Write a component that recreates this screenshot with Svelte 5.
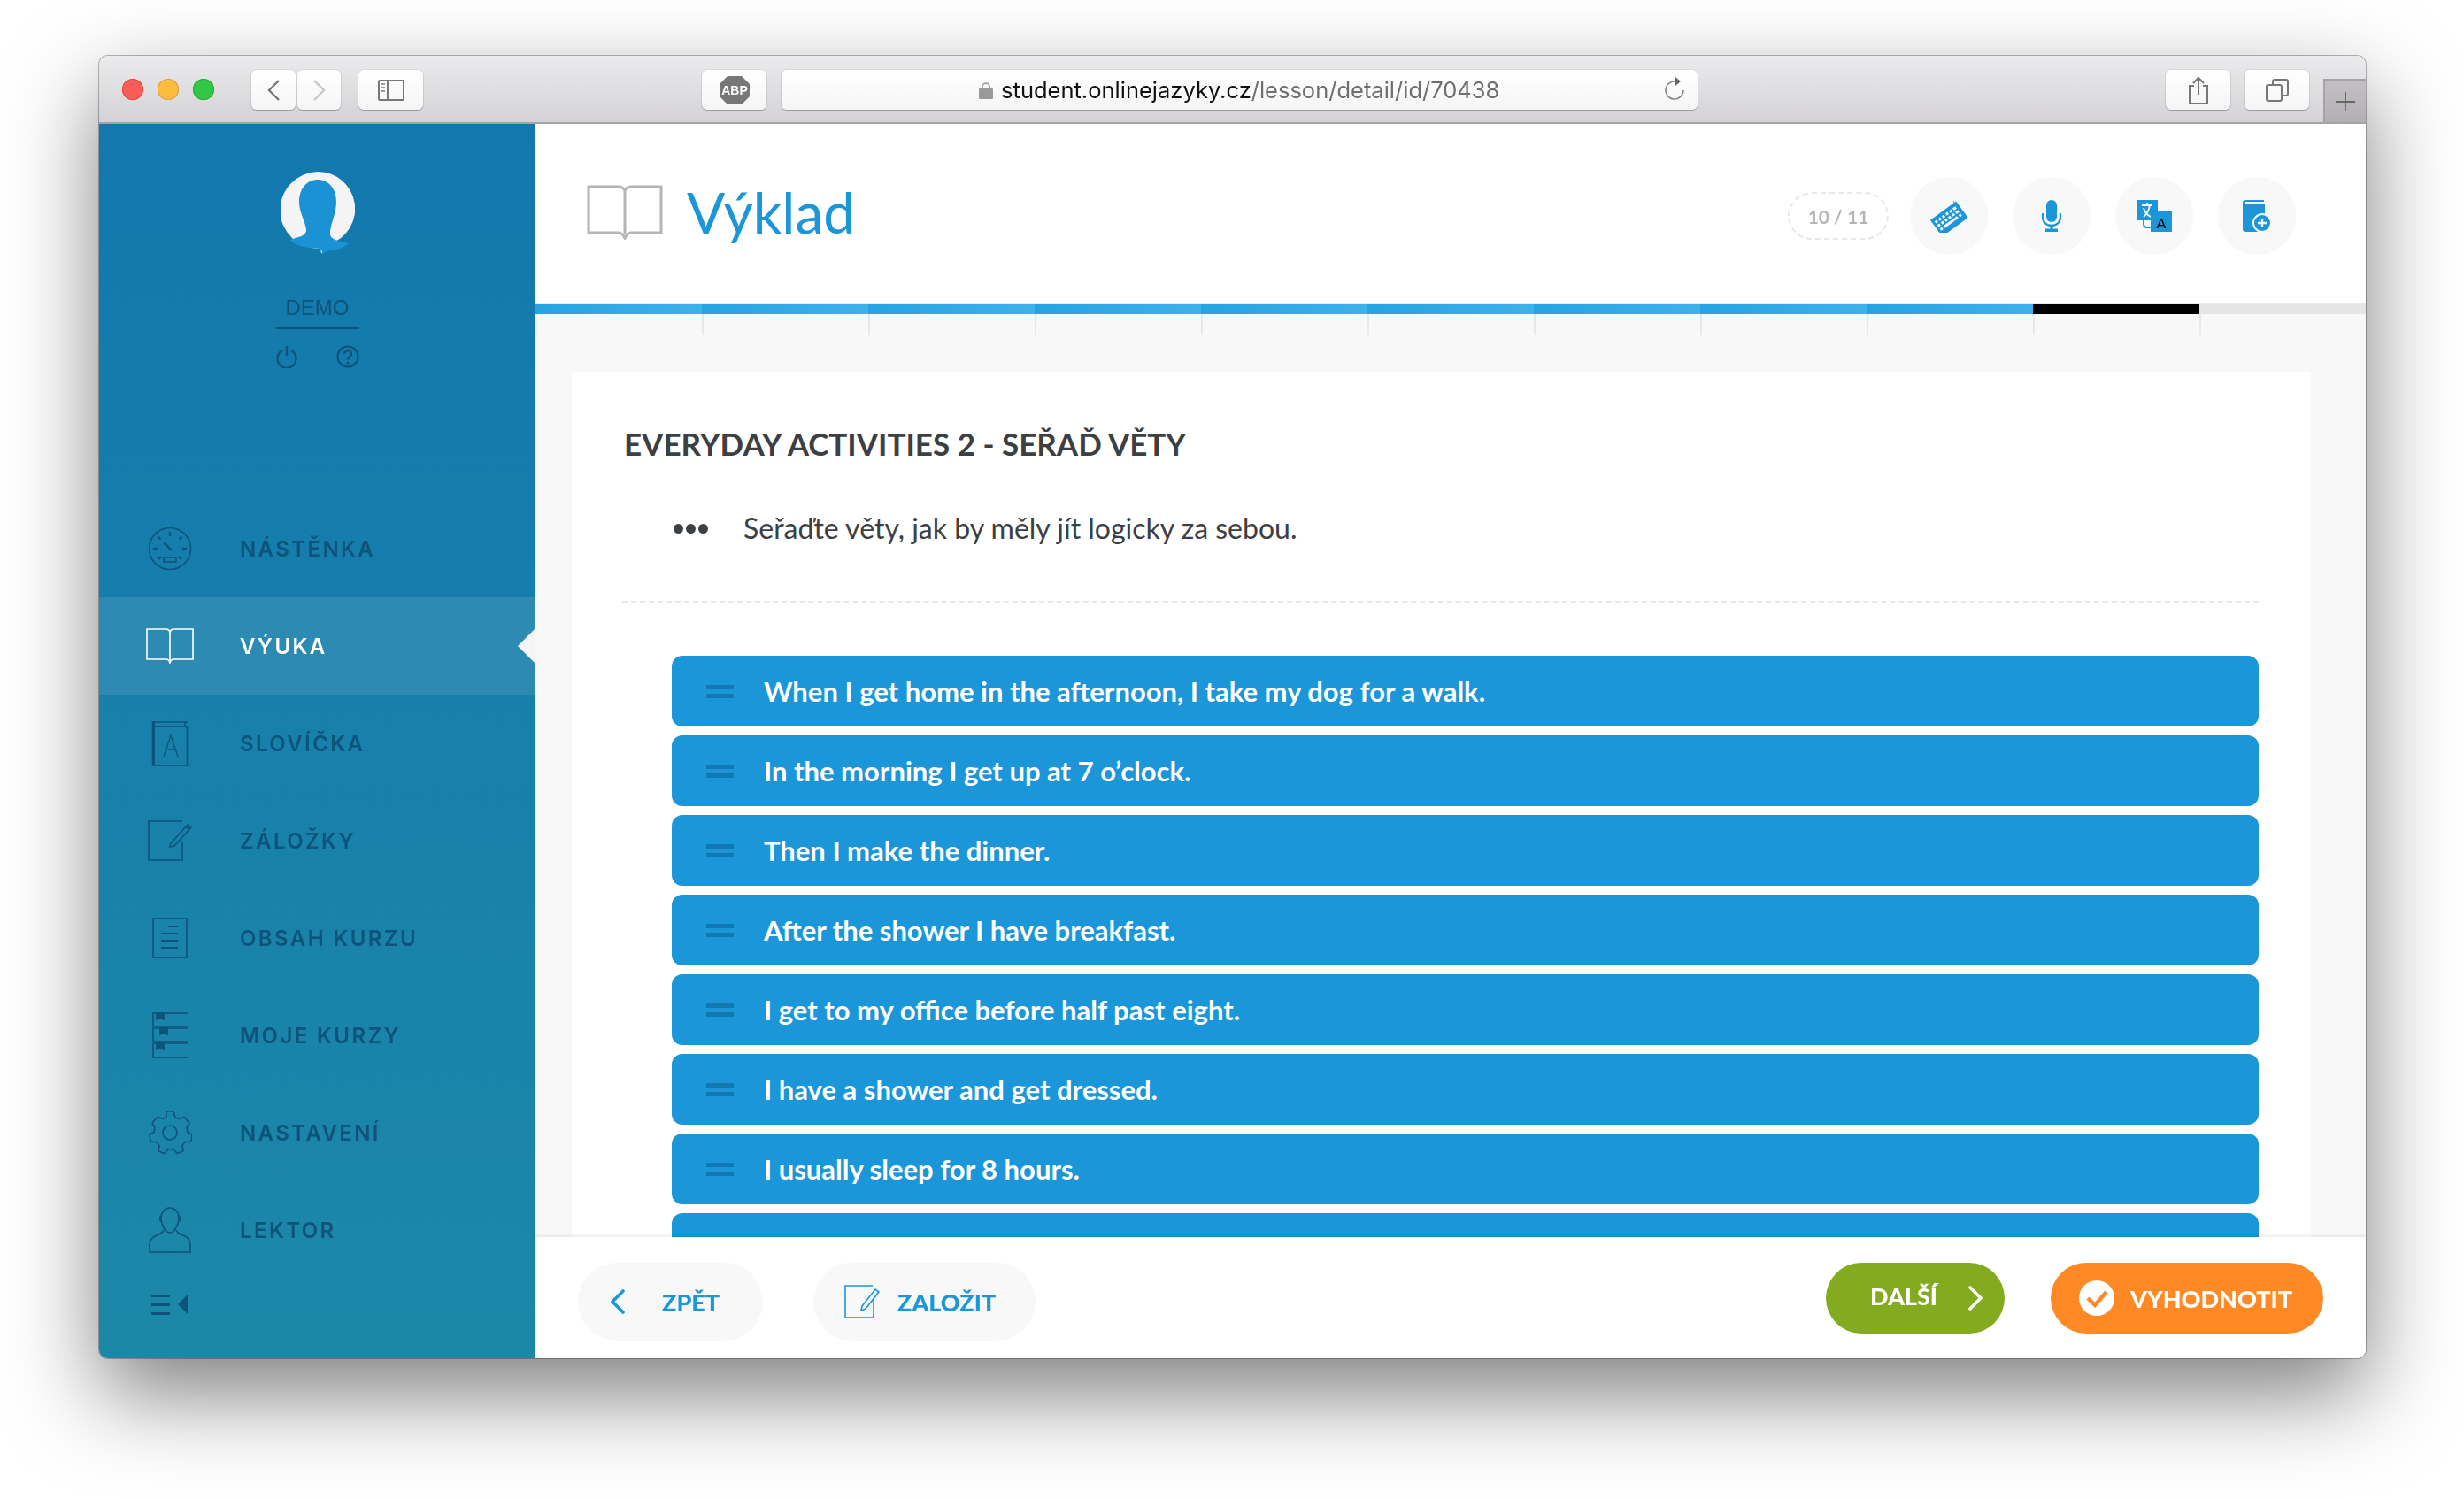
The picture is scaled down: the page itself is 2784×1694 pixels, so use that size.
<script lang="ts">
    // nav icons are stroked with currentColor, each drawn at its real pixel size
    const navItems = [
        {
            label: "NÁSTĚNKA", w: 50, h: 50,
            svg: `<circle cx="25" cy="25" r="23.5"/><path d="M25 6v5M11.5 11.5l3 3M38.5 11.5l-3 3M6 25h5M39 25h5M12 37l3-3M38 37l-3-3" stroke-width="2.4"/><path d="M18 18l9 9" stroke-width="2.4"/><rect x="18" y="35" width="14" height="5"/>`,
        },
        {
            label: "VÝUKA", w: 54, h: 40, active: true,
            svg: `<path d="M1 1h22c2 0 3 1 4 3 1-2 2-3 4-3h22v34H31c-2 0-3 1-4 4-1-3-2-4-4-4H1z"/><path d="M27 4v33"/>`,
        },
        {
            label: "SLOVÍČKA", w: 42, h: 52,
            svg: `<path d="M2 2h39M1.500 1v50h39V7H3"/><path d="M2.500 1v50" stroke-width="3"/><path d="M38 2v5"/><path d="M14 41l8-24 8 24M17 33h11" stroke-width="1.300"/>`,
        },
        {
            label: "ZÁLOŽKY", w: 50, h: 46,
            svg: `<path d="M39 1H1v44h38V24"/><path d="M26 26l19-21 4 3-19 21-5 1z"/><path d="M43 7l4 3"/>`,
        },
        {
            label: "OBSAH KURZU", w: 40, h: 46,
            svg: `<rect x="1" y="1" width="38" height="44"/><path d="M18 10h11M10 18h19M10 26h19M10 34h19" stroke-width="2"/>`,
        },
        {
            label: "MOJE KURZY", w: 40, h: 52,
            svg: `<path d="M40 1H1v15h39M40 18H1v15h39M40 35H1v16h39"/><path d="M5 1h8v7l-4-2-4 2zM9 18h8v7l-4-2-4 2zM5 35h8v7l-4-2-4 2z" fill="currentColor"/>`,
        },
        {
            label: "NASTAVENÍ", w: 50, h: 50,
            svg: `<path d="M21 2c1-1 7-1 8 0l2 6 4 2 6-2c1 1 5 5 6 7l-3 5 1 5 5 3c0 2-1 7-2 8l-6 0-3 4 1 6c-2 1-6 3-7 3l-4-5h-6l-4 5c-2 0-5-2-7-3l1-6-3-4-6 0c-1-1-2-6-2-8l5-3 1-5-3-5c1-2 5-6 6-7l6 2 4-2z" transform="translate(0 -0.5)"/><circle cx="25" cy="25" r="8"/>`,
        },
        {
            label: "LEKTOR", w: 48, h: 52,
            svg: `<path d="M14 13c0-8 5-12 10-12s10 4 10 12c0 7-5 16-10 16s-10-9-10-16z"/><path d="M14 10c-2 0-2 6 1 7M34 10c2 0 2 6-1 7"/><path d="M17 26c-1 3-3 4-8 6-5 2-8 5-8 11v8h46v-8c0-6-3-9-8-11-5-2-7-3-8-6"/>`,
        },
    ];

    const sentences = [
        "When I get home in the afternoon, I take my dog for a walk.",
        "In the morning I get up at 7 o’clock.",
        "Then I make the dinner.",
        "After the shower I have breakfast.",
        "I get to my office before half past eight.",
        "I have a shower and get dressed.",
        "I usually sleep for 8 hours.",
        "",
    ];

    const current = 10;
    const total = 11;
    const segments = Array.from({ length: total }, (_, i) => i + 1);
</script>

<div class="window">
    <div class="toolbar">
        <div class="lights">
            <span class="light red"></span>
            <span class="light yellow"></span>
            <span class="light green"></span>
        </div>
        <div class="tb-btn back">
            <svg width="16" height="26" viewBox="0 0 16 26" fill="none" stroke="#777" stroke-width="2.4"><path d="M14 2L3 13l11 11" /></svg>
        </div>
        <div class="tb-btn forward">
            <svg width="16" height="26" viewBox="0 0 16 26" fill="none" stroke="#c8c8c8" stroke-width="2.4"><path d="M2 2l11 11L2 24" /></svg>
        </div>
        <div class="tb-btn sidebar-btn">
            <svg width="30" height="24" viewBox="0 0 30 24" fill="none" stroke="#777" stroke-width="2"><rect x="1" y="1" width="28" height="22" rx="1" /><path d="M11 1v22" /><path d="M4 5h4M4 9h4M4 13h4" stroke-width="2" stroke="#999" /></svg>
        </div>
        <div class="tb-btn abp">
            <svg width="36" height="34" viewBox="0 0 36 34"><path d="M10 1h16l9 9v14l-9 9H10l-9-9V10z" fill="#777" /><text x="18" y="22" text-anchor="middle" class="abp-text">ABP</text></svg>
        </div>
        <div class="url">
            <span class="address">
                <svg width="16" height="20" viewBox="0 0 16 20"><path d="M4 9V6a4 4 0 0 1 8 0v3" fill="none" stroke="#aaa" stroke-width="2" /><rect y="8" width="16" height="12" rx="1" fill="#999" /></svg>
                <span><span class="host">student.onlinejazyky.cz</span>/lesson/detail/id/70438</span>
            </span>
            <svg class="reload" width="24" height="28" viewBox="0 0 24 28" fill="none" stroke="#888" stroke-width="1.600"><path d="M15 6.500A10 10 0 1 0 22 16" /><path d="M13 1l6 5-6 5z" fill="#666" stroke="none" /></svg>
        </div>
        <div class="tb-btn share">
            <svg width="24" height="32" viewBox="0 0 24 32" fill="none" stroke="#777" stroke-width="2"><path d="M7 11H2v20h20V11h-5" /><path d="M12 21V2M6 8l6-6 6 6" /></svg>
        </div>
        <div class="tb-btn tabs">
            <svg width="26" height="26" viewBox="0 0 26 26" fill="none" stroke="#777" stroke-width="2"><rect x="1" y="7" width="17" height="18" rx="2" /><path d="M8 7V3a2 2 0 0 1 2-2h13a2 2 0 0 1 2 2v14a2 2 0 0 1-2 2h-5" /></svg>
        </div>
        <div class="new-tab">
            <svg width="24" height="24" viewBox="0 0 24 24" stroke="#666" stroke-width="1.800"><path d="M12 1v22M1 12h22" /></svg>
        </div>
    </div>

    <div class="main">
        <aside class="sidebar">
            <div class="profile">
                <svg class="avatar" width="84" height="94" viewBox="0 0 84 94">
                    <path d="M42 0a42 42 0 0 1 13 82c-3 3-6 6-9 11 0-3-1-5-2-6A42 42 0 0 1 42 0z" fill="#f4f4f4" />
                    <path d="M42 9c12 0 21 10 21 25 0 14-8 28-7 37 1 6 9 7 21 10C68 90 56 87 47 93c0-3-1-5-3-6-12-1-26-2-34-10 10-3 18-4 19-10 0-9-8-20-8-33C21 19 30 9 42 9z" fill="#1b92d4" />
                </svg>
                <div class="demo">DEMO</div>
                <div class="profile-icons">
                    <svg width="24" height="26" viewBox="0 0 24 26" fill="none" stroke="currentColor" stroke-width="2.400"><path d="M7 6a10.500 10.500 0 1 0 10 0" /><path d="M12 1v11" /></svg>
                    <svg width="26" height="26" viewBox="0 0 26 26" fill="none" stroke="currentColor" stroke-width="2.200"><circle cx="13" cy="13" r="11.500" /><path d="M9 10a4 4 0 1 1 6.500 3c-1.500 1-2.500 1.600-2.500 3.500" stroke-width="2.600" /><circle cx="13" cy="20" r="1.600" fill="currentColor" stroke="none" /></svg>
                </div>
            </div>

            <nav class="nav">
                {#each navItems as item}
                    <div class="nav-item" class:active={item.active}>
                        <span class="nav-icon">
                            <svg width={item.w} height={item.h} viewBox={`0 0 ${item.w} ${item.h}`} fill="none" stroke="currentColor" stroke-width="1.600">{@html item.svg}</svg>
                        </span>
                        <span class="nav-label">{item.label}</span>
                    </div>
                {/each}
            </nav>

            <div class="collapse">
                <svg width="41" height="23" viewBox="0 0 41 23" fill="currentColor"><path d="M0 0h21v3H0zM0 10h21v3H0zM0 20h21v3H0z" /><path d="M41 0v22L30 11z" /></svg>
            </div>
        </aside>

        <div class="content">
            <header class="head">
                <div class="title">
                    <svg width="86" height="62" viewBox="0 0 86 62" fill="none" stroke="#b5b5b5" stroke-width="3"><path d="M2 2h34c3 0 5 1 7 4 2-3 4-4 7-4h34v52H50c-3 0-5 2-7 6-2-4-4-6-7-6H2z" /><path d="M43 6v50" /></svg>
                    <h1>Výklad</h1>
                </div>
                <div class="tools">
                    <span class="counter">{current} / {total}</span>
                    <span class="round">
                        <svg width="42" height="38" viewBox="0 0 42 38">
                            <path d="M27 2c-2 2 2 4 0 7" fill="none" stroke="#1b96d9" stroke-width="1" />
                            <g transform="rotate(-36 21 22)">
                                <rect x="3" y="11" width="36" height="23" fill="#1b96d9" />
                                <path d="M6 15h3v3H6zM11 15h3v3h-3zM16 15h3v3h-3zM21 15h3v3h-3zM26 15h3v3h-3zM31 15h4v3h-4zM6 20h3v3H6zM11 20h3v3h-3zM16 20h3v3h-3zM21 20h3v3h-3zM26 20h3v3h-3zM31 20h4v3h-4zM6 25h3v3H6zM11 25h19v3H11zM32 25h3v3h-3z" fill="#f8f8f8" />
                            </g>
                        </svg>
                    </span>
                    <span class="round">
                        <svg width="22" height="36" viewBox="0 0 22 36" fill="#1b96d9"><rect x="5" width="12" height="25" rx="6" /><path d="M1 15v4c0 6 4 10 10 10s10-4 10-10v-4" fill="none" stroke="#1b96d9" stroke-width="2.400" /><rect x="9.500" y="28" width="3" height="5" /><rect x="4" y="32.500" width="14" height="3.500" /></svg>
                    </span>
                    <span class="round">
                        <svg width="40" height="36" viewBox="0 0 40 36">
                            <rect width="24" height="23" fill="#1b96d9" />
                            <path d="M6 6h12M12 3v3M8 19c4-3 6-8 7-13M8 9c1 4 4 8 8 10" fill="none" stroke="#f8f8f8" stroke-width="1.800" />
                            <path d="M8 23v4c0 3 2 4 4 4h4" fill="none" stroke="#1b96d9" stroke-width="2" />
                            <rect x="16" y="13" width="24" height="23" fill="#1b96d9" stroke="#f8f8f8" stroke-width="0" />
                            <text x="28" y="32" text-anchor="middle" class="tr-a">A</text>
                        </svg>
                    </span>
                    <span class="round">
                        <svg width="32" height="36" viewBox="0 0 32 36">
                            <path d="M3 0h21v2H2v3h23v31H3c-2 0-3-1-3-3V3c0-2 1-3 3-3z" fill="#1b96d9" />
                            <circle cx="22" cy="26" r="10" fill="#1b96d9" stroke="#f8f8f8" stroke-width="2" />
                            <path d="M22 21v10M17 26h10" stroke="#f8f8f8" stroke-width="2.400" />
                        </svg>
                    </span>
                </div>
            </header>

            <div class="progress">
                {#each segments as n}
                    <div class="seg">
                        <div class="seg-bar" class:done={n < current} class:now={n === current}></div>
                    </div>
                {/each}
            </div>

            <div class="scroll">
                <section class="card">
                    <h2>EVERYDAY ACTIVITIES 2 - SEŘAĎ VĚTY</h2>
                    <div class="hint">
                        <span class="dots"><i></i><i></i><i></i></span>
                        <p>Seřaďte věty, jak by měly jít logicky za sebou.</p>
                    </div>
                    <ul class="list">
                        {#each sentences as s}
                            <li>
                                <span class="handle"></span>
                                <span>{s}</span>
                            </li>
                        {/each}
                    </ul>
                </section>
            </div>

            <footer class="foot">
                <div class="foot-side">
                    <button class="pill back-pill">
                        <svg width="18" height="28" viewBox="0 0 18 28" fill="none" stroke="#1b96d9" stroke-width="3.600" stroke-linecap="round" stroke-linejoin="round"><path d="M15 2L3 14l12 12" /></svg>
                        ZPĚT
                    </button>
                    <button class="pill save-pill">
                        <svg width="40" height="38" viewBox="0 0 40 38" fill="none" stroke="#1b96d9" stroke-width="1.600"><path d="M32 1H1v36h32V16" /><path d="M20 24L35 5l4 3-15 19-5 2z" /></svg>
                        ZALOŽIT
                    </button>
                </div>
                <div class="foot-side right">
                    <button class="pill next">
                        <span class="next-label">DALŠÍ</span>
                        <svg width="18" height="28" viewBox="0 0 18 28" fill="none" stroke="#fff" stroke-width="3.600" stroke-linecap="round" stroke-linejoin="round"><path d="M3 2l12 12L3 26" /></svg>
                    </button>
                    <button class="pill evaluate">
                        <svg width="40" height="40" viewBox="0 0 40 40"><circle cx="20" cy="20" r="20" fill="#fff" /><path d="M10 20l8 8 13-15" fill="none" stroke="#ff8a25" stroke-width="4.500" /></svg>
                        VYHODNOTIT
                    </button>
                </div>
            </footer>
        </div>
    </div>
</div>

<style>
    :global(body) {
        margin: 0;
        background: #fff;
        font-family: "Lato", "Liberation Sans", sans-serif;
    }

    .window {
        box-sizing: border-box;
        width: 2561px;
        height: 1472px;
        margin: 63px 0 0 112px;
        border-radius: 10px;
        overflow: hidden;
        display: flex;
        flex-direction: column;
        box-shadow: 0 0 0 1px rgba(0, 0, 0, 0.28);
    }

    /* shadow sits on a wrapper-less window, so filter is used to escape overflow clipping */
    :global(#app) {
        filter: drop-shadow(0 40px 50px rgba(0, 0, 0, 0.5));
        width: 2784px;
        height: 1694px;
    }

    .toolbar {
        box-sizing: border-box;
        height: 77px;
        flex: none;
        display: flex;
        align-items: flex-start;
        background: linear-gradient(#ebeaec, #d4d2d6);
        border-bottom: 2px solid #a5a3a6;
    }

    .lights {
        display: flex;
        gap: 16px;
        margin: 26px 0 0 26px;
    }

    .light {
        width: 24px;
        height: 24px;
        border-radius: 50%;
    }

    .red { background: #fc5b57; box-shadow: inset 0 0 0 1px #e2463f; }
    .yellow { background: #fdbc40; box-shadow: inset 0 0 0 1px #e09e2e; }
    .green { background: #33c748; box-shadow: inset 0 0 0 1px #27aa35; }

    .tb-btn, .url {
        height: 45px;
        margin-top: 16px;
        background: linear-gradient(#fff, #f5f5f5);
        border-radius: 6px;
        box-shadow: 0 1px 1px rgba(0, 0, 0, 0.25), 0 0 0 1px rgba(0, 0, 0, 0.06);
        display: flex;
        align-items: center;
        justify-content: center;
    }

    .back { width: 51px; margin-left: 42px; }
    .forward { width: 49px; margin-left: 2px; }
    .sidebar-btn { width: 74px; margin-left: 20px; }
    .abp { width: 74px; margin-left: 315px; }
    .abp-text { font: 700 14px "Liberation Sans", sans-serif; fill: #fff; }

    .url {
        width: 1045px;
        margin-left: 17px;
        position: relative;
        color: #6f6f6f;
        font: 25.500px "Inter", "Liberation Sans", sans-serif;
    }

    .address {
        display: flex;
        align-items: center;
        gap: 9px;
        margin-left: -1px;
    }

    .host { color: #111; }

    .reload {
        position: absolute;
        right: 14px;
        top: 7px;
    }

    .share { width: 74px; margin-left: 529px; }
    .tabs { width: 74px; margin-left: 16px; }

    .new-tab {
        box-sizing: border-box;
        width: 48px;
        height: 49px;
        margin: 26px 0 0 16px;
        background: linear-gradient(#c2c0c3, #b2b0b3);
        border: 2px solid #a5a3a6;
        border-width: 2px 0 0 2px;
        display: flex;
        align-items: center;
        justify-content: center;
    }

    .main {
        flex: 1;
        min-height: 0;
        display: flex;
    }

    .sidebar {
        width: 493px;
        flex: none;
        display: flex;
        flex-direction: column;
        background: linear-gradient(#1278ae, #1c88a8);
        color: #0d537a;
    }

    .profile {
        height: 425px;
        flex: none;
        box-sizing: border-box;
        padding-top: 54px;
        display: flex;
        flex-direction: column;
        align-items: center;
    }

    .demo {
        width: 94px;
        margin-top: 46px;
        padding-bottom: 8px;
        border-bottom: 2px solid #0d537a;
        text-align: center;
        font: 24px "Liberation Sans", sans-serif;
    }

    .profile-icons {
        margin-top: 18px;
        display: flex;
        gap: 44px;
    }

    .nav-item {
        height: 110px;
        position: relative;
        display: flex;
        align-items: center;
    }

    .nav-icon {
        width: 160px;
        flex: none;
        display: flex;
        justify-content: center;
        margin-right: -1px;
    }

    .nav-label {
        font-family: "Inter", "Liberation Sans", sans-serif;
        font-size: 24px;
        font-weight: 600;
        letter-spacing: 2.400px;
    }

    .nav-item.active {
        background: #2d8bb3;
        color: #fff;
    }

    .nav-item.active::after {
        content: "";
        position: absolute;
        right: 0;
        top: 35px;
        border: 20px solid transparent;
        border-left: 0;
        border-right-color: #f5f5f5;
    }

    .collapse {
        padding: 18px 0 0 59px;
    }

    .content {
        flex: 1;
        min-width: 0;
        display: flex;
        flex-direction: column;
        background: #f8f8f8;
    }

    .head {
        height: 203px;
        flex: none;
        box-sizing: border-box;
        background: #fff;
        display: flex;
        align-items: flex-start;
        justify-content: space-between;
        padding: 60px 79px 0 58px;
    }

    .title {
        display: flex;
        align-items: center;
        gap: 27px;
        margin-top: 9px;
    }

    h1 {
        margin: 0;
        font-size: 64px;
        font-weight: 400;
        line-height: 62px;
        color: #1b96d9;
    }

    .tools {
        display: flex;
        align-items: center;
        gap: 28px;
    }

    .counter {
        box-sizing: border-box;
        width: 114px;
        height: 54px;
        margin-right: -4px;
        border: 2px dashed #e8e8e8;
        border-radius: 27px;
        display: flex;
        align-items: center;
        justify-content: center;
        font-size: 21px;
        font-weight: 700;
        color: #b5b5b5;
    }

    .round {
        width: 88px;
        height: 88px;
        border-radius: 50%;
        background: #f8f8f8;
        display: flex;
        align-items: center;
        justify-content: center;
    }

    .progress {
        display: flex;
        flex: none;
        border-top: 2px solid #e9e9e9;
        margin-top: -1px;
    }

    .seg {
        flex: 1;
        height: 35px;
        box-sizing: border-box;
        border-left: 2px solid #e8e8e8;
    }

    .seg:first-child {
        border-left-color: #f0f0f0;
    }

    .seg-bar {
        height: 11px;
        margin-left: -2px;
        background: #e5e5e5;
    }

    .seg-bar.done {
        background: linear-gradient(90deg, #27a2e2, #3fb1ea);
    }

    .seg-bar.now {
        background: #000;
    }

    .scroll {
        flex: 1;
        min-height: 0;
        overflow: hidden;
        padding: 41px 62px 0 41px;
    }

    .card {
        background: #fff;
        padding: 59px 59px 0 59px;
    }

    h2 {
        margin: 0;
        font-size: 35px;
        line-height: 44px;
        font-weight: 700;
        color: #3c4043;
    }

    .hint {
        display: flex;
        align-items: center;
        gap: 40px;
        margin: 52px 0 0 56px;
        padding-bottom: 0;
    }

    .dots {
        display: flex;
        gap: 3px;
    }

    .dots i {
        width: 11px;
        height: 11px;
        border-radius: 50%;
        background: #3c4043;
    }

    .hint p {
        margin: 0;
        font-size: 32px;
        line-height: 44px;
        color: #3c4043;
    }

    .list {
        list-style: none;
        margin: 60px 0 0 0;
        padding: 60px 0 0 56px;
        margin-left: -2px;
        border-top: 2px dashed #e8e8e8;
        display: flex;
        flex-direction: column;
        gap: 10px;
    }

    .list li {
        height: 80px;
        box-sizing: border-box;
        padding-left: 39px;
        background: #1b96d9;
        border-radius: 12px;
        display: flex;
        align-items: center;
        gap: 34px;
        color: #fff;
        font-size: 31px;
        font-weight: 700;
    }

    .handle {
        width: 31px;
        height: 15px;
        flex: none;
        box-sizing: border-box;
        border-top: 5px solid #1378b0;
        border-bottom: 5px solid #1378b0;
    }

    .foot {
        height: 137px;
        flex: none;
        box-sizing: border-box;
        background: #fff;
        box-shadow: 0 -2px 4px rgba(0, 0, 0, 0.08);
        position: relative;
        display: flex;
        justify-content: space-between;
        padding: 29px 48px 0 48px;
    }

    .foot-side {
        display: flex;
        gap: 57px;
        align-items: flex-start;
    }

    .foot-side.right {
        gap: 52px;
    }

    .pill {
        border: none;
        height: 88px;
        padding: 0;
        border-radius: 44px;
        background: #f8f8f8;
        color: #1b96d9;
        font-family: "Lato", "Liberation Sans", sans-serif;
        font-size: 27px;
        font-weight: 900;
        display: flex;
        align-items: center;
    }

    .back-pill {
        width: 209px;
        padding-left: 36px;
        gap: 41px;
    }

    .save-pill {
        width: 251px;
        padding-left: 35px;
        gap: 20px;
    }

    .next, .evaluate {
        height: 80px;
        border-radius: 40px;
        color: #fff;
    }

    .next {
        width: 202px;
        background: #84aa1f;
        padding-left: 50px;
        gap: 34px;
    }

    .next-label {
        margin-top: -6px;
    }

    .evaluate {
        width: 308px;
        background: #ff8a25;
        padding-left: 32px;
        gap: 18px;
    }
</style>
